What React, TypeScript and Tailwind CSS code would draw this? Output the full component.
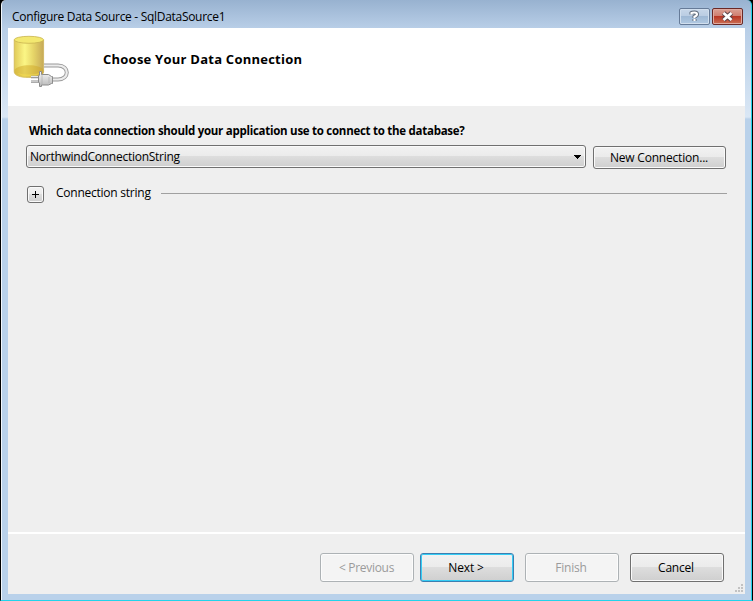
import React from "react";

const face = "rounded-[3px] border border-[#707070] bg-[linear-gradient(#f2f2f2_0%,#ebebeb_48%,#dddddd_50%,#cfcfcf_100%)] shadow-[inset_0_0_0_1px_#fafafa]";
const disabled = "rounded-[3px] border border-[#adb2b5] bg-[#f4f4f4] text-[#9b9b9b] shadow-[inset_0_0_0_1px_#fcfcfc]";
const focused = "rounded-[3px] border border-[#3c7fb1] bg-[linear-gradient(#f2f2f2_0%,#ebebeb_48%,#dddddd_50%,#cfcfcf_100%)] shadow-[inset_0_0_0_1px_#35cdf5]";

function DatabaseIcon() {
  return (
    <svg className="ml-[5px] mt-[7px] shrink-0" width="58" height="54" viewBox="0 0 58 54">
      <defs>
        <linearGradient id="body">
          <stop offset="0" stopColor="#e0cb58" />
          <stop offset=".15" stopColor="#ecdc6c" />
          <stop offset=".36" stopColor="#fbf685" />
          <stop offset=".65" stopColor="#e6d568" />
          <stop offset="1" stopColor="#c6a958" />
        </linearGradient>
        <linearGradient id="plug" x2="0" y2="1">
          <stop offset="0" stopColor="#f8f8f8" />
          <stop offset="1" stopColor="#b8b8b8" />
        </linearGradient>
      </defs>
      <path d="M1.200 5v31.500c0 4 6 6 14.700 6s14.700-2 14.700-6V5z" fill="url(#body)" stroke="#cbb050" strokeWidth=".7" />
      <path d="M1.500 35c3-6.500 26-6.500 29 0v1.500c0 4-6 5.500-14.500 5.500S1.500 40 1.500 36.500z" fill="#d0a828" fillOpacity=".5" />
      <path d="M4 38q11 3 23 0l-4 3H10z" fill="#f4dc50" fillOpacity=".6" />
      <ellipse cx="15.900" cy="4.800" rx="14.700" ry="3.500" fill="#f3e870" stroke="#c9b450" strokeWidth=".8" />
      <path d="M31 30.500h14c11.700 0 11.700 14 0 14h-5" fill="none" stroke="#999" strokeWidth="4" />
      <path d="M31 30.500h14c11.700 0 11.700 14 0 14h-5" fill="none" stroke="#ececec" strokeWidth="2.200" />
      <path d="M18 42h8M18 46.500h8" stroke="#909090" strokeWidth="2.600" />
      <path d="M18 41.600h8M18 46.100h8" stroke="#eee" strokeWidth="1" />
      <path d="M26.500 36.500h2v3h7l3 2h1v7h-1l-3 1.500h-7v1.500h-2v-3.500l-1-1v-6l1-1z" fill="url(#plug)" stroke="#8c8c8c" />
      <path d="M29 39v11M36 42v6" stroke="#aaa" strokeWidth=".6" />
    </svg>
  );
}

function Grip() {
  return (
    <svg className="absolute right-[2px] bottom-[2px]" width="8" height="8" shapeRendering="crispEdges">
      <path d="M6 0h2v2H6zM3 3h2v2H3zM6 3h2v2H6zM0 6h2v2H0zM3 6h2v2H3zM6 6h2v2H6z" fill="#c2c2c2" />
    </svg>
  );
}

export default function App() {
  return (
    <div className="flex h-[601px] w-[753px] flex-col overflow-hidden border-x border-b border-l-black border-r-black border-b-[#22d3ea] bg-black font-['Open_Sans','Noto_Sans',sans-serif] text-[12px] text-black">
      <div className="flex h-[600px] flex-col rounded-t-[5px] border-l border-r border-l-[#f2f7fc] border-r-[#22d3ea] bg-[linear-gradient(#98b2d0_0px,#b8cee7_28px,#c9dbee_75px,#dae7f5_117px,#b9d1ea_119px,#b9d1ea_100%)] px-[6px] pb-[6px]">
        <header className="flex h-[28px] shrink-0 items-start justify-between">
          <span className="ml-[4px] mt-[8px] whitespace-nowrap text-[12px] leading-[18px] tracking-[-0.300px]">Configure Data Source - SqlDataSource1</span>
          <div className="mr-[2px] mt-[8px] flex gap-[2px]">
            <button className="flex h-[17px] w-[31px] items-center justify-center rounded-[2px] border border-[#667b98] bg-[linear-gradient(#c7d7e9_0%,#b9cce2_48%,#9fb9d5_50%,#b1c9e2_100%)] shadow-[inset_0_0_0_1px_#d1dfee]">
              <svg className="shrink-0" width="11" height="13" viewBox="0 0 11 13"><path d="M2.500 4.500V3Q3 2.500 5.500 2.500T8 4.500Q8 5.500 5.500 6.700V8M5.500 9v2" fill="none" stroke="#5d6978" strokeWidth="4" /><path d="M2.500 4.500V3Q3 2.500 5.500 2.500T8 4.500Q8 5.500 5.500 6.700V8M5.500 9v2" fill="none" stroke="#fff" strokeWidth="2.200" /></svg>
            </button>
            <button className="flex h-[17px] w-[31px] items-center justify-center rounded-[2px] border border-[#6b2926] bg-[linear-gradient(#daa094_0%,#cf7c6e_48%,#b93625_50%,#cb7055_100%)] shadow-[inset_0_0_0_1px_#dfaaa0]">
              <svg width="13" height="11" viewBox="0 0 13 11"><path d="M2.500 2l8 7M10.500 2l-8 7" stroke="#59434a" strokeWidth="4.800" /><path d="M2.500 2l8 7M10.500 2l-8 7" stroke="#fff" strokeWidth="2.800" /></svg>
            </button>
          </div>
        </header>
        <section className="flex h-[78px] shrink-0 bg-white">
          <DatabaseIcon />
          <h1 className="ml-[32px] mt-[22px] whitespace-nowrap text-[13px] font-bold leading-[18px] tracking-[0.240px]">Choose Your Data Connection</h1>
        </section>
        <main className="flex h-[426px] shrink-0 flex-col bg-[#efefef] pl-[18px] pt-[16px]">
          <h2 className="ml-[3px] h-[18px] whitespace-nowrap text-[11.5px] font-bold leading-[18px] tracking-[-0.270px]">Which data connection should your application use to connect to the database?</h2>
          <div className="mt-[5px] flex gap-[7px]">
            <div className={`flex h-[23px] w-[560px] items-center justify-between pl-[3px] pr-[4px] ${face}`}>
              <span className="tracking-[-0.260px]">NorthwindConnectionString</span>
              <svg width="7" height="4" shapeRendering="crispEdges"><path d="M0 0h7v1H6v1H5v1H4v1H3V3H2V2H1V1H0z" /></svg>
            </div>
            <button className={`mt-px flex h-[23px] w-[133px] items-center justify-center pr-px ${face}`}><span className="tracking-[-0.200px]">New Connection...</span></button>
          </div>
          <div className="ml-px mt-[15px] flex">
            <button className={`mt-[2px] flex size-[17px] items-center justify-center ${face}`}>
              <svg width="7" height="7" shapeRendering="crispEdges"><path d="M3 0h1v3h3v1H4v3H3V4H0V3h3z" /></svg>
            </button>
            <span className="ml-[12px] w-[105px] whitespace-nowrap leading-[18px] tracking-[-0.240px]">Connection string</span>
            <div className="mt-[9px] h-px w-[566px] bg-[#a0a0a0]" />
          </div>
        </main>
        <footer className="relative flex h-[62px] shrink-0 items-start border-t-2 border-white bg-[#efefef] pl-[312px] pt-[19px]">
          <button className={`h-[29px] w-[94px] pr-px ${disabled}`}><span className="tracking-[-0.300px]">&lt; Previous</span></button>
          <button className={`ml-[6px] h-[29px] w-[94px] pr-[2px] ${focused}`}><span className="tracking-[-0.150px]">Next &gt;</span></button>
          <button className={`ml-[11px] h-[29px] w-[94px] pr-[2px] ${disabled}`}><span className="tracking-[-0.200px]">Finish</span></button>
          <button className={`ml-[11px] h-[29px] w-[94px] pr-[2px] ${face}`}><span className="tracking-[-0.200px]">Cancel</span></button>
          <Grip />
        </footer>
      </div>
    </div>
  );
}
